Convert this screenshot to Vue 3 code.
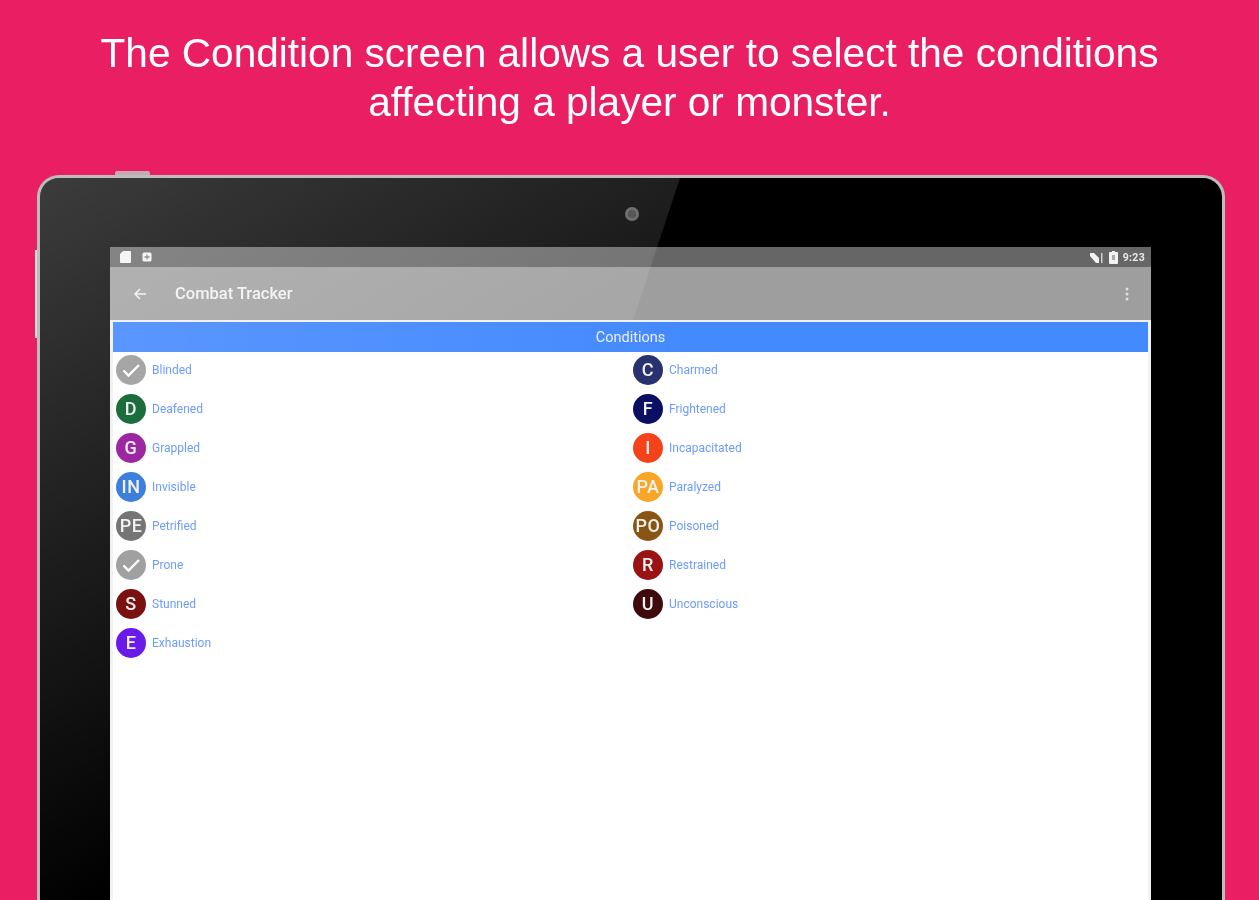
<script setup>
const left = [
  { name: 'Blinded', checked: true, color: '#a6a6a6' },
  { name: 'Deafened', mark: 'D', color: '#1b6e3c' },
  { name: 'Grappled', mark: 'G', color: '#9c27a0' },
  { name: 'Invisible', mark: 'IN', color: '#3f7fdc' },
  { name: 'Petrified', mark: 'PE', color: '#757575' },
  { name: 'Prone', checked: true, color: '#a0a0a0' },
  { name: 'Stunned', mark: 'S', color: '#7b1010' },
  { name: 'Exhaustion', mark: 'E', color: '#6a1bea' },
]
const right = [
  { name: 'Charmed', mark: 'C', color: '#283270' },
  { name: 'Frightened', mark: 'F', color: '#0b0f62' },
  { name: 'Incapacitated', mark: 'I', color: '#f4421a' },
  { name: 'Paralyzed', mark: 'PA', color: '#f9a526' },
  { name: 'Poisoned', mark: 'PO', color: '#8a5512' },
  { name: 'Restrained', mark: 'R', color: '#9a1212' },
  { name: 'Unconscious', mark: 'U', color: '#3e0a0c' },
]
const columns = [left, right]
</script>

<template>
  <div class="page">
    <h1 class="headline">The Condition screen allows a user to select the conditions<br />affecting a player or monster.</h1>
    <div class="device">
      <span class="btn-top"></span>
      <span class="btn-side"></span>
      <div class="tablet">
        <span class="camera"></span>
        <div class="screen">
          <div class="statusbar">
            <div class="status-group">
              <svg width="11" height="12" viewBox="0 0 11 12"><path d="M3 0h7a1 1 0 0 1 1 1v10a1 1 0 0 1-1 1H1a1 1 0 0 1-1-1V3z" fill="#f2f2f2"/></svg>
              <svg width="10" height="10" viewBox="0 0 10 10"><rect x="0.500" y="0.500" width="9" height="9" rx="1.500" fill="#f2f2f2"/><path d="M5 2.500v5M2.500 5h5" stroke="#777" stroke-width="1.300"/></svg>
            </div>
            <div class="status-group right">
              <svg width="15" height="11" viewBox="0 0 15 11"><path d="M1 1h4l5 5v5H7L1 4z" fill="#f2f2f2"/><path d="M12 1h1.500v10H12z" fill="#d0d0d0"/></svg>
              <svg class="battery" width="9" height="13" viewBox="0 0 9 13"><path d="M3 0h3v1h2a1 1 0 0 1 1 1v10a1 1 0 0 1-1 1H1a1 1 0 0 1-1-1V2a1 1 0 0 1 1-1h2z" fill="#f2f2f2"/><rect x="3" y="4" width="3" height="5" fill="#aaa"/></svg>
              <span class="clock">9:23</span>
            </div>
          </div>
          <div class="appbar">
            <svg class="back" width="14" height="14" viewBox="0 0 14 14"><path d="M13 7H2M7 2L2 7l5 5" fill="none" stroke="#f0f0f0" stroke-width="1.500"/></svg>
            <span class="title">Combat Tracker</span>
            <svg class="more" width="4" height="16" viewBox="0 0 4 16"><circle cx="2" cy="3" r="1.500" fill="#e0e0e0"/><circle cx="2" cy="8" r="1.500" fill="#e0e0e0"/><circle cx="2" cy="13" r="1.500" fill="#e0e0e0"/></svg>
          </div>
          <div class="content">
            <div class="section-title">Conditions</div>
            <div class="grid">
              <ul v-for="(col, i) in columns" :key="i" class="column">
                <li v-for="c in col" :key="c.name" class="row">
                  <span class="avatar" :style="{ background: c.color }">
                    <svg v-if="c.checked" width="24" height="24" viewBox="0 0 24 24"><path d="M4.500 12.500l5 5L20 7" fill="none" stroke="#fff" stroke-width="2.400"/></svg>
                    <span v-else class="mark">{{ c.mark }}</span>
                  </span>
                  <span class="name">{{ c.name }}</span>
                </li>
              </ul>
            </div>
          </div>
        </div>
        <div class="glare"></div>
      </div>
    </div>
  </div>
</template>

<style>
html, body { margin: 0; background: #e91e63; }
</style>

<style scoped>
.page {
  width: 1259px;
  height: 900px;
  overflow: hidden;
  background: #e91e63;
  font-family: Roboto, "Liberation Sans", sans-serif;
}
.headline {
  margin: 0;
  padding-top: 29px;
  height: 175px;
  box-sizing: border-box;
  font-family: "Liberation Sans", Arial, sans-serif;
  font-size: 40.600px;
  line-height: 49px;
  font-weight: 400;
  color: #fff;
  text-align: center;
  filter: blur(0.4px);
}
.device {
  position: relative;
  width: 1188px;
  margin-left: 37px;
  filter: blur(0.6px);
}
.btn-top {
  position: absolute;
  left: 78px;
  top: -4px;
  width: 35px;
  height: 4px;
  background: #c4a9b2;
  border-radius: 2px 2px 0 0;
}
.btn-side {
  position: absolute;
  left: -2px;
  top: 75px;
  width: 2px;
  height: 88px;
  background: #ddd;
}
.tablet {
  position: relative;
  box-sizing: border-box;
  height: 725px;
  padding: 69px 71px 0 70px;
  background: #000;
  border: 3px solid #bdbdbd;
  border-bottom: 0;
  border-radius: 22px 22px 0 0;
  overflow: hidden;
}
.camera {
  position: absolute;
  left: 585px;
  top: 29px;
  width: 14px;
  height: 14px;
  box-sizing: border-box;
  border-radius: 50%;
  background: #404040;
  border: 3px solid #5c5c5c;
}
.screen {
  height: 100%;
}
.statusbar {
  height: 20px;
  padding: 0 6px 0 10px;
  display: flex;
  align-items: center;
  justify-content: space-between;
  background: #666;
}
.status-group {
  display: flex;
  align-items: center;
  gap: 11px;
}
.status-group.right {
  gap: 5px;
}
.clock {
  font-size: 10.500px;
  font-weight: 700;
  letter-spacing: 0.300px;
  color: #e8e8e8;
}
.appbar {
  height: 53px;
  display: flex;
  align-items: center;
  background: #9e9e9e;
  padding: 0 22px 0 23px;
}
.back {
  flex: none;
}
.title {
  margin-left: 28px;
  font-size: 16.500px;
  font-weight: 500;
  color: #f2f2f2;
}
.more {
  margin-left: auto;
}
.content {
  position: relative;
  z-index: 1;
  height: 100%;
  border: 3px solid #f1f2f4;
  border-width: 2px 3px 0;
  background: #fff;
}
.section-title {
  height: 30px;
  line-height: 32px;
  background: linear-gradient(90deg, #5a96ff, #448aff 55%);
  color: #eaf2ff;
  font-size: 14.500px;
  text-align: center;
}
.grid {
  display: grid;
  grid-template-columns: 517px 1fr;
  padding: 3px 0 0 3px;
}
.column {
  list-style: none;
  margin: 0;
  padding: 0;
  display: flex;
  flex-direction: column;
  gap: 9px;
}
.row {
  height: 30px;
  display: flex;
  align-items: center;
  gap: 6px;
}
.avatar {
  width: 30px;
  height: 30px;
  flex: none;
  border-radius: 50%;
  display: flex;
  align-items: center;
  justify-content: center;
  color: #f2f2f2;
  font-size: 18px;
  font-weight: 500;
  letter-spacing: 0.500px;
}
.mark {
  line-height: 29px;
  height: 30px;
}
.name {
  font-size: 12px;
  color: #6c9bff;
}
.glare {
  position: absolute;
  inset: 0;
  pointer-events: none;
  clip-path: polygon(0 0, 640px 0, 400px 725px, 0 725px);
  background: linear-gradient(150deg, rgba(255,255,255,.235) 0%, rgba(255,255,255,0) 54%);
}
</style>
